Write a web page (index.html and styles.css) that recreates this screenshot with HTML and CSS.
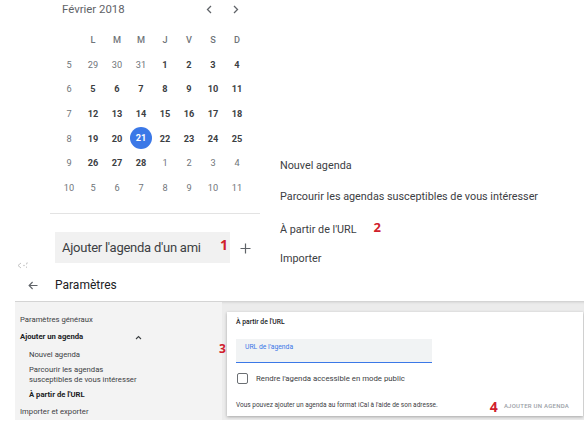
FILE: index.html
```html
<!DOCTYPE html>
<html lang="fr">
<head>
<meta charset="utf-8">
<title>Agenda</title>
<link rel="stylesheet" href="styles.css">
</head>
<body>
<div class="page">
  <div class="top">
    <div class="cal-col">
      <div class="cal-head">
        <span class="month">Février 2018</span>
        <div class="navs">
          <span class="nav"><svg width="6" height="9" viewBox="0 0 6 9"><path d="M5 1 L1.5 4.5 L5 8" fill="none" stroke="#5f6368" stroke-width="1.3"/></svg></span>
          <span class="nav"><svg width="6" height="9" viewBox="0 0 6 9"><path d="M1 1 L4.5 4.5 L1 8" fill="none" stroke="#5f6368" stroke-width="1.3"/></svg></span>
        </div>
      </div>
      <div class="grid">
        <span></span><span class="dh">L</span><span class="dh">M</span><span class="dh">M</span><span class="dh">J</span><span class="dh">V</span><span class="dh">S</span><span class="dh">D</span>
        <span class="wk">5</span><span class="mu">29</span><span class="mu">30</span><span class="mu">31</span><span class="d">1</span><span class="d">2</span><span class="d">3</span><span class="d">4</span>
        <span class="wk">6</span><span class="d">5</span><span class="d">6</span><span class="d">7</span><span class="d">8</span><span class="d">9</span><span class="d">10</span><span class="d">11</span>
        <span class="wk">7</span><span class="d">12</span><span class="d">13</span><span class="d">14</span><span class="d">15</span><span class="d">16</span><span class="d">17</span><span class="d">18</span>
        <span class="wk">8</span><span class="d">19</span><span class="d">20</span><span class="d today"><b>21</b></span><span class="d">22</span><span class="d">23</span><span class="d">24</span><span class="d">25</span>
        <span class="wk">9</span><span class="d">26</span><span class="d">27</span><span class="d">28</span><span class="mu">1</span><span class="mu">2</span><span class="mu">3</span><span class="mu">4</span>
        <span class="wk">10</span><span class="mu">5</span><span class="mu">6</span><span class="mu">7</span><span class="mu">8</span><span class="mu">9</span><span class="mu">10</span><span class="mu">11</span>
      </div>
      <div class="divider"></div>
      <div class="friend-row">
        <div class="friend-box"><span class="friend-text">Ajouter l'agenda d'un ami</span><span class="mark m1">1</span></div>
        <span class="plus"><svg width="11" height="11" viewBox="0 0 11 11"><path d="M5.5 0.5 V10.5 M0.5 5.5 H10.5" stroke="#5f6368" stroke-width="1.2"/></svg></span>
      </div>
    </div>
    <ul class="menu">
      <li>Nouvel agenda</li>
      <li>Parcourir les agendas susceptibles de vous intéresser</li>
      <li>À partir de l'URL<span class="mark m2">2</span></li>
      <li>Importer</li>
    </ul>
  </div>

  <div class="tiny-icon"><svg width="12" height="7" viewBox="0 0 12 7"><path d="M4 1 L1 3.5 L4 6" fill="none" stroke="#c4c4c4" stroke-width="1"/><circle cx="7" cy="3.5" r="0.8" fill="#c4c4c4"/><path d="M9.5 1 V2.5 M9.5 4.5 V6 M9.5 1 H11" stroke="#cfcfcf" stroke-width="1" fill="none"/></svg></div>

  <div class="settings-bar">
    <span class="back"><svg width="10" height="9" viewBox="0 0 10 9"><path d="M9.5 4.5 H1.2 M4.6 1 L1.1 4.5 L4.6 8" fill="none" stroke="#5f6368" stroke-width="1.1"/></svg></span>
    <span class="title">Paramètres</span>
  </div>

  <div class="settings-body">
    <nav class="side">
      <div class="s-item s1">Paramètres généraux</div>
      <div class="s-item s2 strong"><span>Ajouter un agenda</span><svg class="caret" width="7" height="5" viewBox="0 0 7 5"><path d="M1 4 L3.5 1.5 L6 4" fill="none" stroke="#3c4043" stroke-width="1.1"/></svg></div>
      <div class="s-item s3 sub">Nouvel agenda</div>
      <div class="s-item s4 sub">Parcourir les agendas<br>susceptibles de vous intéresser</div>
      <div class="s-item s5 sub strong">À partir de l'URL</div>
      <div class="s-item s6">Importer et exporter</div>
    </nav>
    <main class="content">
      <section class="card">
        <span class="mark m3">3</span>
        <h2 class="card-title">À partir de l'URL</h2>
        <div class="field"><span class="field-label">URL de l'agenda</span></div>
        <label class="check-row"><span class="box"></span><span>Rendre l'agenda accessible en mode public</span></label>
        <div class="card-foot">
          <span class="hint">Vous pouvez ajouter un agenda au format iCal à l'aide de son adresse.</span>
          <span class="mark m4">4</span>
          <span class="btn">AJOUTER UN AGENDA</span>
        </div>
      </section>
    </main>
  </div>
</div>
</body>
</html>
```

FILE: styles.css
```css
* { box-sizing: border-box; }
html, body { margin: 0; padding: 0; background: #fff; }
body { font-family: Roboto, "Noto Sans", Arial, sans-serif; color: #3c4043; }
.page { width: 584px; height: 421px; overflow: hidden; position: relative; }

.top { display: flex; height: 263px; }
.cal-col { width: 260px; padding-left: 50px; flex: none; }

.cal-head { display: flex; align-items: center; height: 18px; padding-left: 12px; }
.month { font-size: 11.4px; color: #5f6368; }
.navs { margin-left: auto; margin-right: 17px; display: flex; gap: 13px; }
.nav { width: 14px; height: 14px; display: flex; align-items: center; justify-content: center; }

.grid {
  margin-top: 9px; margin-left: 7px;
  display: grid;
  grid-template-columns: repeat(8, 24px);
  grid-auto-rows: 24.7px;
  font-size: 9.2px;
}
.grid span { display: flex; align-items: center; justify-content: center; }
.dh { color: #70757a; font-weight: 500; }
.wk { color: #70757a; }
.mu { color: #70757a; }
.d { color: #3c4043; font-weight: 700; }
.today b {
  width: 22px; height: 22px; border-radius: 50%;
  background: #3b78e7; color: #fff; font-weight: 700;
  display: flex; align-items: center; justify-content: center;
  margin-top: -1px;
}

.divider { margin-top: 13px; height: 1px; background: #e3e3e3; }

.friend-row { display: flex; align-items: center; margin-top: 18px; margin-left: 5px; }
.friend-box {
  width: 175px; height: 31px; background: #f1f1f1;
  display: flex; align-items: center; padding-left: 7px;
}
.friend-text { font-size: 13px; color: #3c4043; letter-spacing: -0.25px; }
.plus { margin-left: 10px; display: flex; margin-top: 2px; }

.mark { color: #d0202c; font-family: "Open Sans", "Noto Sans", sans-serif; font-weight: 700; }
.m1 { font-size: 14px; margin-left: auto; margin-right: 2px; margin-top: -5px; }
.m2 { font-size: 13px; margin-left: 17px; display: inline-block; vertical-align: 1px; }
.m3 { position: absolute; left: -8px; top: 28px; font-size: 12px; }
.m4 { font-size: 14px; margin-left: auto; margin-top: 3px; }

.menu { list-style: none; margin: 0; padding: 150px 0 0 20px; font-size: 10.8px; color: #3c4043; }
.menu li { line-height: 31px; height: 31px; white-space: nowrap; }

.tiny-icon { height: 7px; margin-top: -1px; padding-left: 17px; display: flex; }

.settings-bar {
  height: 33px; display: flex; align-items: center;
  margin-left: 15px; padding-left: 13px;
  border-bottom: 1px solid #d4d4d4;
}
.back { display: flex; width: 27px; }
.title { font-size: 12px; color: #202124; }

.settings-body { display: flex; margin-left: 15px; height: 118px; background: #ececec; box-shadow: inset 0 2px 2px -1px rgba(0,0,0,0.08); }
.side { width: 207px; flex: none; background: #f3f3f3; padding-left: 5px; font-size: 7.7px; color: #3c4043; }
.s-item { line-height: 10px; white-space: nowrap; }
.strong { font-weight: 700; color: #202124; }
.sub { padding-left: 9px; }
.s1 { margin-top: 13px; }
.s2 { margin-top: 7px; display: flex; align-items: center; }
.caret { margin-left: 52px; }
.s3 { margin-top: 8px; }
.s4 { margin-top: 5px; line-height: 9.5px; }
.s5 { margin-top: 6px; }
.s6 { margin-top: 7px; }

.content { flex: 1; padding: 10px 1px 4px 5px; }
.card {
  position: relative; height: 104px; background: #fff;
  box-shadow: 0 1px 3px rgba(0,0,0,0.3);
  padding: 6px 14px 0 9px;
}
.card-title { margin: 0; font-size: 6.8px; font-weight: 500; color: #202124; line-height: 8px; }
.field {
  margin-top: 13px; width: 196px; height: 24px; background: #f1f3f4;
  border-bottom: 1.5px solid #3b78e7; padding: 4px 0 0 9px;
}
.field-label { display: block; line-height: 8px; font-size: 6.8px; color: #3b78e7; }
.check-row { display: flex; align-items: center; margin-top: 10px; font-size: 7.8px; color: #3c4043; }
.box { width: 11px; height: 11px; border: 1.4px solid #6b6f73; border-radius: 2px; margin-right: 8px; margin-left: 1px; }
.card-foot { display: flex; align-items: center; margin-top: 10px; }
.hint { font-size: 6.5px; color: #3c4043; white-space: nowrap; }
.btn { font-size: 6px; font-weight: 500; color: #9aa0a6; letter-spacing: 0.25px; margin-left: 6px; white-space: nowrap; }
```
